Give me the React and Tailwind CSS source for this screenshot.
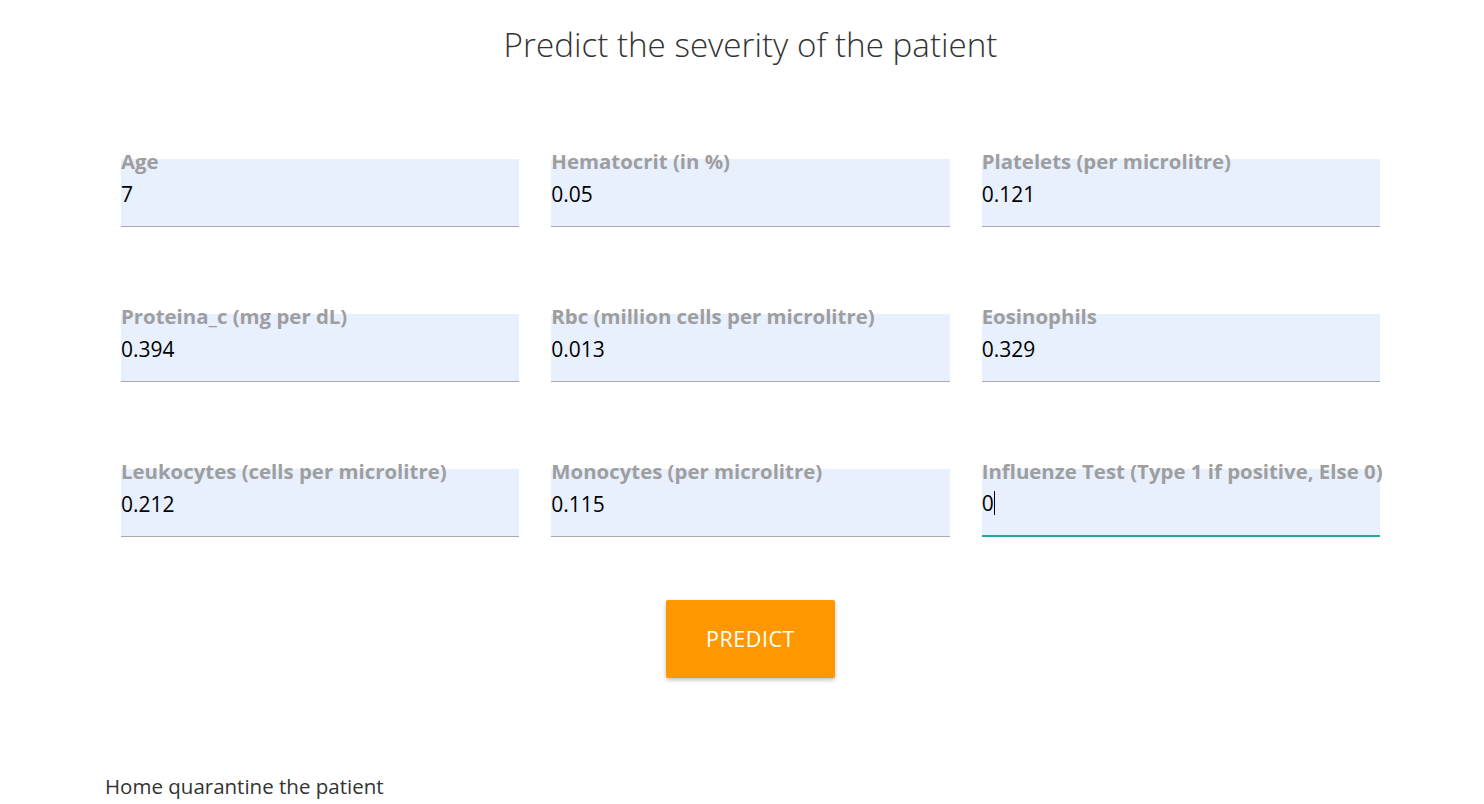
const fields = [
  { label: "Age", value: "7" },
  { label: "Hematocrit (in %)", value: "0.05" },
  { label: "Platelets (per microlitre)", value: "0.121" },
  { label: "Proteina_c (mg per dL)", value: "0.394" },
  { label: "Rbc (million cells per microlitre)", value: "0.013" },
  { label: "Eosinophils", value: "0.329" },
  { label: "Leukocytes (cells per microlitre)", value: "0.212" },
  { label: "Monocytes (per microlitre)", value: "0.115" },
  { label: "Influenze Test (Type 1 if positive, Else 0)", value: "0", focused: true },
];

function Field({ label, value, focused }) {
  return (
    <div className="flex flex-col">
      <label className="relative z-10 text-[20.4px] leading-[22px] font-bold text-[#9e9e9e] whitespace-nowrap">
        {label}
      </label>
      <div
        className={
          "-mt-[13px] h-[68px] bg-[#e8f0fe] flex items-end pb-[20px] " +
          (focused ? "border-b-2 border-[#26a69a]" : "border-b border-[#a9a9b0]")
        }
      >
        <span className="text-[21px] leading-[24px] text-black">{value}</span>
        {focused && <span className="w-px h-[24px] bg-black" />}
      </div>
    </div>
  );
}

export default function App() {
  return (
    <div className="min-h-screen bg-white" style={{ fontFamily: '"Open Sans", "Noto Sans", sans-serif' }}>
      <div className="ml-[105px] w-[1291px]">
        <div className="px-4">
          <h1 className="pt-[21px] text-center text-[33.2px] leading-[48px] font-light text-[#333]">
            Predict the severity of the patient
          </h1>
          <div className="mt-[81px] grid grid-cols-3 gap-x-8 gap-y-[78px]">
            {fields.map((f, i) => (
              <Field key={i} {...f} />
            ))}
          </div>
          <div className="mt-[63px] flex justify-center">
            <button className="w-[169px] h-[78px] rounded-[2px] bg-[#ff9800] text-white text-[21.5px] tracking-wide shadow-[0_2px_4px_rgba(0,0,0,0.25)]">
              PREDICT
            </button>
          </div>
        </div>
        <p className="mt-[96px] text-[20.5px] leading-[24px] text-[#333]">Home quarantine the patient</p>
      </div>
    </div>
  );
}
